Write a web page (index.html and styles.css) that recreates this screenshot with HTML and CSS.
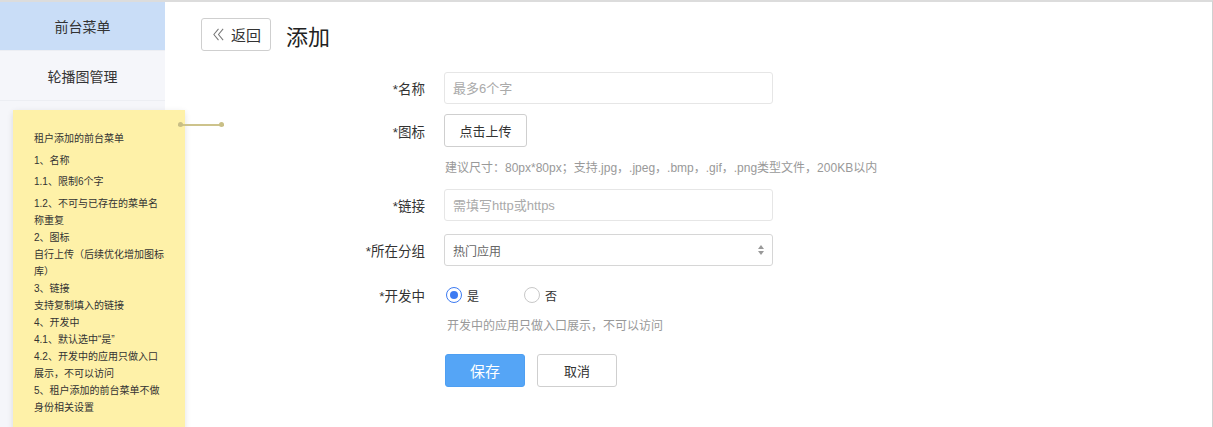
FILE: index.html
```html
<!DOCTYPE html>
<html lang="zh-CN">
<head>
    <meta charset="UTF-8">
    <meta name="viewport" content="width=device-width, initial-scale=1.0">
    <title>添加前台菜单</title>
    <link rel="stylesheet" href="styles.css">
</head>
<body>
    <div class="app">
        <!-- Left navigation -->
        <aside class="sidebar">
            <div class="nav-item active">前台菜单</div>
            <div class="nav-item">轮播图管理</div>
        </aside>

        <main class="main">
            <div class="page-head">
                <button class="back-btn" type="button">
                    <svg class="back-icon" viewBox="0 0 14 14" width="13" height="13">
                        <polyline points="7,1 2,7 7,13" />
                        <polyline points="12,1 7,7 12,13" />
                    </svg>
                    返回
                </button>
                <h1 class="page-title">添加</h1>
            </div>

            <form class="menu-form" onsubmit="event.preventDefault();">
                <div class="row row-name">
                    <label class="field-label">*名称</label>
                    <input class="text-input" type="text" placeholder="最多6个字">
                </div>
                <div class="row row-icon">
                    <label class="field-label">*图标</label>
                    <button class="upload-btn" type="button">点击上传</button>
                </div>
                <p class="hint hint-icon">建议尺寸：80px*80px；支持.jpg，.jpeg，.bmp，.gif，.png类型文件，200KB以内</p>
                <div class="row row-link">
                    <label class="field-label">*链接</label>
                    <input class="text-input" type="text" placeholder="需填写http或https">
                </div>
                <div class="row row-group">
                    <label class="field-label">*所在分组</label>
                    <div class="select-box">
                        <span>热门应用</span>
                        <svg class="select-arrows" viewBox="0 0 6 10" width="6" height="10">
                            <polygon points="3,0 6,4 0,4" />
                            <polygon points="0,6 6,6 3,10" />
                        </svg>
                    </div>
                </div>
                <div class="row row-dev">
                    <label class="field-label">*开发中</label>
                    <span class="radio checked"><i></i>是</span>
                    <span class="radio"><i></i>否</span>
                </div>
                <p class="hint hint-dev">开发中的应用只做入口展示，不可以访问</p>
                <div class="actions">
                    <button class="btn-primary" type="submit">保存</button>
                    <button class="btn-default" type="button">取消</button>
                </div>
            </form>
        </main>

        <!-- Requirement note pinned over the page -->
        <div class="note">
            <p class="gap">租户添加的前台菜单</p>
            <p class="gap">1、名称</p>
            <p class="gap">1.1、限制6个字</p>
            <p>1.2、不可与已存在的菜单名<br>称重复</p>
            <p>2、图标</p>
            <p>自行上传（后续优化增加图标<br>库）</p>
            <p>3、链接</p>
            <p>支持复制填入的链接</p>
            <p>4、开发中</p>
            <p>4.1、默认选中“是”</p>
            <p>4.2、开发中的应用只做入口<br>展示，不可以访问</p>
            <p>5、租户添加的前台菜单不做<br>身份相关设置</p>
        </div>
        <div class="note-link"></div>
    </div>
</body>
</html>
```

FILE: styles.css
```css
* {
    box-sizing: border-box;
}
body {
    margin: 0;
    font-family: "Helvetica Neue", "Liberation Sans", "Noto Sans CJK SC", sans-serif;
    color: #333;
    background: #fff;
}
.app {
    position: relative;
    display: flex;
    height: 427px;
    border-top: 2px solid #dcdcdc;
    border-right: 1px solid #d0d0d0;
    overflow: hidden;
}

/* Sidebar */
.sidebar {
    width: 165px;
    flex-shrink: 0;
    background: #f5f6fa;
}
.nav-item {
    height: 50px;
    display: flex;
    align-items: center;
    justify-content: center;
    font-size: 14px;
    color: #333;
    border-bottom: 1px solid #eceef3;
}
.nav-item.active {
    height: 49px;
    background: #c9ddf7;
}

/* Main area */
.main {
    flex: 1;
    padding-left: 36px;
}
.page-head {
    display: flex;
    align-items: center;
    margin-top: 16px;
    height: 33px;
}
.back-btn {
    display: flex;
    align-items: center;
    gap: 6px;
    height: 33px;
    padding: 0 9px 0 10px;
    background: #fff;
    border: 1px solid #cfcfcf;
    border-radius: 3px;
    font-family: inherit;
    font-size: 15px;
    color: #333;
}
.back-icon polyline {
    fill: none;
    stroke: #777;
    stroke-width: 1.1;
}
.page-title {
    margin: 0 0 0 15px;
    font-size: 22px;
    font-weight: normal;
    color: #222;
}

/* Form */
.menu-form {
    margin-left: 124px;
}
.row {
    display: flex;
    align-items: center;
}
.field-label {
    width: 100px;
    margin-right: 19px;
    text-align: right;
    font-size: 13.5px;
    color: #333;
}
.text-input,
.select-box {
    width: 329px;
    height: 32px;
    padding: 0 8px;
    border: 1px solid #e6e6e6;
    border-radius: 3px;
    font-family: inherit;
    font-size: 13px;
    color: #333;
    outline: none;
}
.text-input::placeholder {
    color: #aaa;
}
.select-box {
    display: flex;
    align-items: center;
    justify-content: space-between;
    border-color: #d6d6d6;
    font-size: 12px;
    color: #666;
}
.select-arrows polygon {
    fill: #999;
}
.upload-btn {
    height: 33px;
    width: 83px;
    background: #fff;
    border: 1px solid #cfcfcf;
    border-radius: 3px;
    font-family: inherit;
    font-size: 13px;
    color: #333;
}
.hint {
    margin: 0 0 0 120px;
    font-size: 12px;
    line-height: 16px;
    color: #999;
}

.row-name { margin-top: 21px; }
.row-icon { margin-top: 10px; }
.hint-icon { margin-top: 13px; }
.row-link { margin-top: 13px; }
.row-group { margin-top: 13px; }
.row-dev { margin-top: 19px; height: 20px; }
.hint-dev { margin-top: 13px; margin-left: 122px; }

/* Radios */
.radio {
    display: flex;
    align-items: center;
    gap: 5px;
    font-size: 12px;
    color: #333;
    width: 76px;
    margin-left: 2px;
}
.radio i {
    width: 16px;
    height: 16px;
    border: 1px solid #c8c8c8;
    border-radius: 50%;
    position: relative;
}
.radio.checked i {
    border: 1.5px solid #3d7bf2;
}
.radio.checked i::after {
    content: "";
    position: absolute;
    top: 2.5px;
    left: 2.5px;
    width: 8px;
    height: 8px;
    border-radius: 50%;
    background: #3d7bf2;
}

/* Buttons */
.actions {
    display: flex;
    gap: 12px;
    margin: 20px 0 0 120px;
}
.btn-primary,
.btn-default {
    width: 80px;
    height: 33px;
    border-radius: 3px;
    font-family: inherit;
}
.btn-primary {
    background: #55a5f6;
    border: 1px solid #4e9ff2;
    color: #fff;
    font-size: 15px;
}
.btn-default {
    background: #fff;
    border: 1px solid #cfcfcf;
    color: #333;
    font-size: 13px;
}

/* Sticky note annotation */
.note {
    position: absolute;
    left: 13px;
    top: 108px;
    width: 172px;
    height: 330px;
    padding: 20px 8px 0 21px;
    background: #fef1a8;
    box-shadow: 0 2px 6px rgba(0, 0, 0, 0.12);
}
.note p {
    margin: 0;
    font-size: 10px;
    line-height: 17px;
    color: #333;
    white-space: nowrap;
}
.note p.gap {
    margin-bottom: 4.5px;
}
.note-link {
    position: absolute;
    left: 178px;
    top: 122px;
    width: 46px;
    height: 1.5px;
    background: #cdc38c;
}
.note-link::before,
.note-link::after {
    content: "";
    position: absolute;
    top: -2px;
    width: 5px;
    height: 5px;
    border-radius: 50%;
    background: #c9bf86;
}
.note-link::before { left: 0; }
.note-link::after { right: 0; }
```
